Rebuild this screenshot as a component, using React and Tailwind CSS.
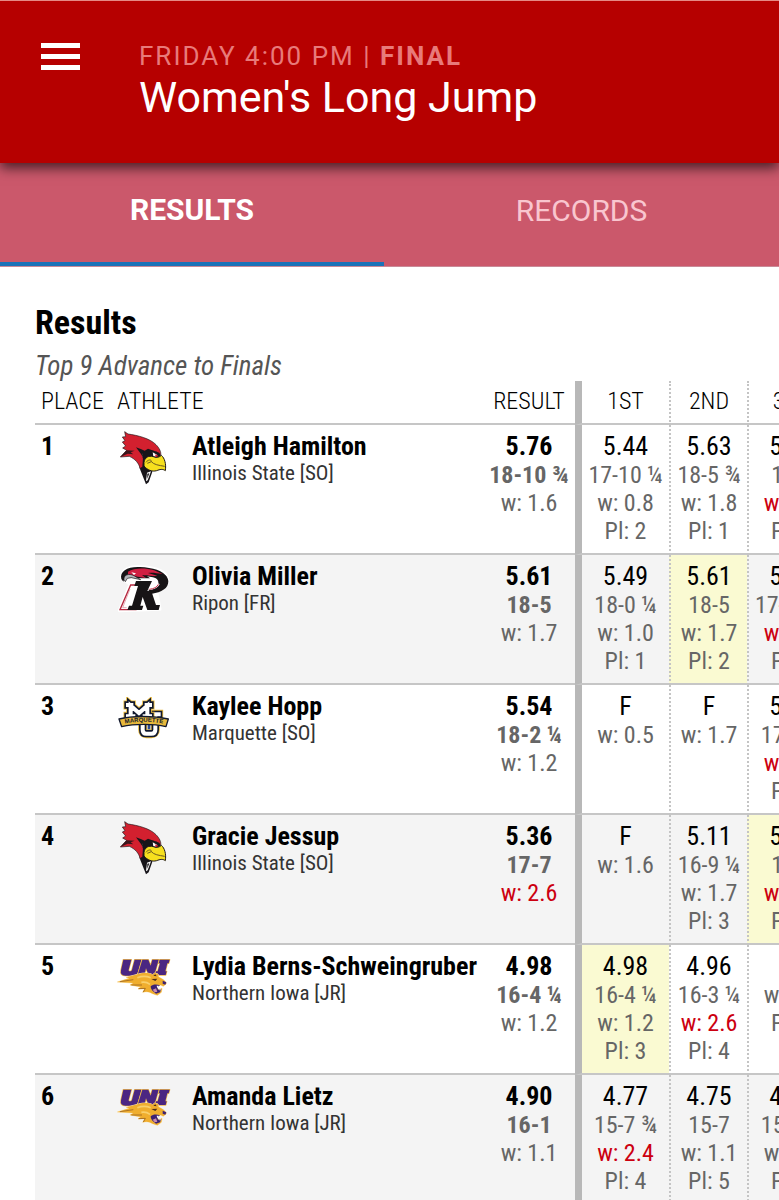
import React from 'react';

function RedbirdLogo() {
  return (
    <svg viewBox="51 27 162 174" className="h-[58px] w-[54px]" role="img" aria-label="Illinois State">
      <path d="M118 98 C122 122 116 134 121 150 L138 193 L146 187 L157 155 L150 140 Z" fill="#17151a" />
      <path d="M141 158 L153 154 L143 181 L138 184 Z" fill="#fff" />
      <path d="M142 161 L148 160 L142 176 Z" fill="#17151a" />
      <path
        d="M74 35 L84 42 C112 46 150 55 168 74 C178 84 184 96 182 106 L170 96 L154 92 L150 106 L138 96 C128 94 124 98 126 104 L130 116 L128 140 L120 146 C118 130 104 116 88 109 L61 111 L80 91 L68 84 L77 78 L67 66 L75 62 L67 51 L77 50 Z"
        fill="#d3202f"
        stroke="#1d171a"
        strokeWidth="2"
        strokeLinejoin="round"
      />
      <path d="M80 91 L104 92 L92 97 L100 103 L83 101 L61 111 Z" fill="#3a161c" />
      <path d="M108 82 L124 88 L134 92 L128 102 L132 114 L120 98 Z" fill="#17151a" />
      <path d="M128 96 L144 86 L178 98 L184 112 L176 118 L154 110 L136 116 L130 130 Z" fill="#17151a" />
      <path d="M158 97 L172 105 L170 112 L160 108 Z" fill="#fff" />
      <path d="M166 103 L174 107 L171 112 L166 110 Z" fill="#d3202f" />
      <path
        d="M132 127 C134 112 146 106 160 110 C172 115 180 110 184 106 C194 114 199 132 196 152 C188 146 180 148 170 152 C156 156 142 150 132 138 Z"
        fill="#f6e01e"
        stroke="#1d171a"
        strokeWidth="3"
        strokeLinejoin="round"
      />
      <path d="M138 127 C146 116 156 120 154 125 C162 134 176 136 194 139 M142 130 L154 125" fill="none" stroke="#6b5a20" strokeWidth="3" />
    </svg>
  );
}

function RiponLogo() {
  return (
    <svg viewBox="51 24 162 150" className="h-[50px] w-[54px]" role="img" aria-label="Ripon">
      <g stroke="#fff" strokeWidth="9" strokeLinejoin="round" fill="#fff">
        <path d="M64 68 C64 42 92 32 124 35 C160 37 202 46 204 76 C205 94 190 102 170 108 L180 163 L58 167 L90 88 Z" />
      </g>
      <path d="M106 90 H92 L60 164 H108 L110 156" fill="none" stroke="#b5283f" strokeWidth="4" />
      <path d="M90 102 L68 158 H80" fill="none" stroke="#d98593" strokeWidth="2" />
      <path d="M108 78 H156 L142 108 H154 L168 150 H180 L176 165 H142 L128 126 L121 152 H130 L126 165 H82 L87 152 H96 L114 93 H103 Z" fill="#171416" />
      <path d="M144 104 C160 104 172 98 175 86 C177 74 168 68 154 66 L130 62 L134 48 C172 44 204 56 205 78 C206 100 184 112 156 116 Z" fill="#171416" />
      <path d="M148 101 C162 100 172 96 176 86" fill="none" stroke="#fff" strokeWidth="7" />
      <path d="M148 103 C162 101 171 97 175 88" fill="none" stroke="#c62945" strokeWidth="3" />
      <path d="M64 72 C58 48 84 34 120 36 C158 38 190 46 202 68 C184 58 158 56 140 62 L150 70 H118 L84 68 C76 68 72 72 70 80 Z" fill="#171416" />
      <path d="M84 50 C102 39 134 38 162 46 L188 57 C168 55 160 52 144 54 L172 62 C154 64 140 62 126 60 L138 69 C118 67 98 62 84 60 Z" fill="#d01f42" />
      <path d="M72 74 C70 60 86 54 102 62 L122 74 L94 68 L82 70 L76 80 Z" fill="#b4b5b9" stroke="#171416" strokeWidth="2" />
      <path d="M94 52 L108 55 L102 60 Z" fill="#fff" />
    </svg>
  );
}

const MU_STROKES = [
  ['#e8b93c', 27],
  ['#12192e', 22],
  ['#ffffff', 12],
];

function MarquetteLogo() {
  return (
    <svg viewBox="51 30 162 126" className="h-[42px] w-[54px]" role="img" aria-label="Marquette">
      {MU_STROKES.map(([color, width]) => (
        <path
          key={color}
          d="M128 92 V128 Q128 140 139 140 H154 Q166 140 166 128 V86 M156 82 H176 M118 92 H132"
          fill="none"
          stroke={color}
          strokeWidth={width}
          strokeLinecap="square"
        />
      ))}
      <path d="M147 98 V127" stroke="#2c4b8f" strokeWidth="8" />
      {MU_STROKES.map(([color, width]) => (
        <path
          key={color}
          d="M92 86 V56 L117 78 L142 56 V86 M84 54 H94 M140 54 H150 M84 88 H100 M134 88 H150"
          fill="none"
          stroke={color}
          strokeWidth={width}
          strokeLinecap="square"
        />
      ))}
      <path d="M57 96 C96 86 160 86 205 96 L198 119 C160 110 104 110 65 119 Z" fill="#e8b93c" stroke="#12192e" strokeWidth="4" strokeLinejoin="round" />
      <path id="marquette-arc" d="M66 112 C104 102 160 102 198 112" fill="none" />
      <text fontFamily="Liberation Sans" fontSize="18" fontWeight="700" fill="#12192e" textAnchor="middle">
        <textPath href="#marquette-arc" startOffset="50%">MARQUETTE</textPath>
      </text>
    </svg>
  );
}

function PantherLogo() {
  return (
    <svg viewBox="51 30 162 126" className="h-[42px] w-[54px]" role="img" aria-label="Northern Iowa">
      <g fill="#4b2682" stroke="#efb84a" strokeWidth="4" paintOrder="stroke" strokeLinejoin="round">
        <path d="M70 44 H94 L86 74 Q85 79 89 79 H91 Q95 79 96 74 L104 44 H124 L114 80 Q110 92 98 92 H76 Q60 92 63 76 Z" />
        <path d="M127 44 H145 L152 62 L157 44 H176 L163 90 H146 L138 70 L133 90 H113 Z" />
        <path d="M179 44 H209 L206 55 H202 L196 79 H200 L197 90 H165 L168 79 H173 L180 55 H176 Z" />
      </g>
      <path
        d="M52 111 L88 100 L78 97 L108 89 C128 82 148 83 158 89 L164 84 L174 87 L176 96 C188 102 198 108 199 116 L190 124 L182 120 L172 124 L174 134 L186 130 L184 142 L172 151 L158 146 C148 140 140 138 128 142 L134 132 L114 132 L122 126 L90 120 L100 114 Z"
        fill="#f0ae2e"
        stroke="#fbe2ac"
        strokeWidth="3"
        paintOrder="stroke"
        strokeLinejoin="round"
      />
      <path d="M60 110 L100 104 M94 120 L126 120 M116 131 L136 130 L130 141" fill="none" stroke="#8a5420" strokeWidth="2" />
      <path d="M112 98 C128 92 142 94 152 98 M124 112 C134 110 142 112 150 118" fill="none" stroke="#f9d06c" strokeWidth="5" />
      <path d="M152 124 C160 116 172 118 180 121 L172 126 L174 134 L184 132 L180 142 L168 146 C160 140 152 134 152 124 Z" fill="#3d2274" />
      <path d="M158 134 L168 130 L172 140 L164 142 Z" fill="#c98bb0" />
      <path d="M154 102 L172 101 L166 108 Z M160 92 L166 88 L170 94 Z" fill="#4b2b1c" />
      <path d="M188 107 L199 112 L196 119 L188 116 Z" fill="#3d2274" />
      <path d="M170 122 L176 122 L172 130 Z M178 132 L183 130 L180 138 Z" fill="#fff" />
    </svg>
  );
}

const LOGOS = {
  redbird: [RedbirdLogo, ''],
  ripon: [RiponLogo, 'pt-1'],
  marquette: [MarquetteLogo, 'pt-2'],
  panther: [PantherLogo, 'pt-[6px]'],
};

const ATHLETES = [
  {
    place: 1, name: 'Atleigh Hamilton', team: 'Illinois State [SO]', logo: 'redbird',
    result: ['5.76', '18-10 ¾', 'w: 1.6'],
    jumps: [['5.44', '17-10 ¼', 'w: 0.8', 'Pl: 2'], ['5.63', '18-5 ¾', 'w: 1.8', 'Pl: 1'], ['5.49', '18-0', 'w: 2.3', 'Pl: 1']],
  },
  {
    place: 2, name: 'Olivia Miller', team: 'Ripon [FR]', logo: 'ripon', best: 1,
    result: ['5.61', '18-5', 'w: 1.7'],
    jumps: [['5.49', '18-0 ¼', 'w: 1.0', 'Pl: 1'], ['5.61', '18-5', 'w: 1.7', 'Pl: 2'], ['5.44', '17-10 ¼', 'w: 2.4', 'Pl: 2']],
  },
  {
    place: 3, name: 'Kaylee Hopp', team: 'Marquette [SO]', logo: 'marquette',
    result: ['5.54', '18-2 ¼', 'w: 1.2'],
    jumps: [['F', 'w: 0.5'], ['F', 'w: 1.7'], ['5.34', '17-6 ¼', 'w: 2.2', 'Pl: 4']],
  },
  {
    place: 4, name: 'Gracie Jessup', team: 'Illinois State [SO]', logo: 'redbird', best: 2,
    result: ['5.36', '17-7', 'w: 2.6'],
    jumps: [['F', 'w: 1.6'], ['5.11', '16-9 ¼', 'w: 1.7', 'Pl: 3'], ['5.36', '17-7', 'w: 2.6', 'Pl: 3']],
  },
  {
    place: 5, name: 'Lydia Berns-Schweingruber', team: 'Northern Iowa [JR]', logo: 'panther', best: 0,
    result: ['4.98', '16-4 ¼', 'w: 1.2'],
    jumps: [['4.98', '16-4 ¼', 'w: 1.2', 'Pl: 3'], ['4.96', '16-3 ¼', 'w: 2.6', 'Pl: 4'], ['F', 'w: 1.5', 'Pl: 5']],
  },
  {
    place: 6, name: 'Amanda Lietz', team: 'Northern Iowa [JR]', logo: 'panther',
    result: ['4.90', '16-1', 'w: 1.1'],
    jumps: [['4.77', '15-7 ¾', 'w: 2.4', 'Pl: 4'], ['4.75', '15-7', 'w: 1.1', 'Pl: 5'], ['4.78', '15-8 ¼', 'w: 1.3', 'Pl: 6']],
  },
];

const DIVIDERS = [
  'border-l-[7px] border-l-[#b8b8b8]',
  'border-l-2 border-l-[#c4c4c4] [border-left-style:dotted]',
  'border-l-2 border-l-[#c4c4c4] [border-left-style:dotted]',
];

const windAided = (line) => line.startsWith('w: ') && Number(line.slice(3)) > 2;

function Mark({ lines, strong }) {
  return lines.map((line, i) => {
    if (i === 0) {
      return (
        <div key={line} className={strong ? 'text-[26px] leading-[30px] font-bold' : 'text-[26px] leading-[30px]'}>
          {line}
        </div>
      );
    }
    const color = windAided(line) ? 'text-[#cc0010]' : 'text-[#666]';
    const weight = strong && i === 1 ? 'font-bold' : 'font-normal';
    return (
      <div key={line} className={`text-2xl leading-[28px] ${color} ${weight}`}>
        {line}
      </div>
    );
  });
}

function AthleteRow({ athlete }) {
  const [Logo, logoPad] = LOGOS[athlete.logo];
  const cell = 'border-b-2 border-b-[#c6c6c6] pt-[6px] pb-2 align-top';
  return (
    <tr className="even:bg-[#f4f4f4]">
      <td className={`${cell} pl-[6px] text-[26px] leading-[30px] font-bold`}>{athlete.place}</td>
      <td className="border-b-2 border-b-[#c6c6c6] pt-1 pl-[6px] align-top">
        <div className={logoPad}>
          <Logo />
        </div>
      </td>
      <td className={`${cell} pl-[6px] whitespace-nowrap`}>
        <div className="text-[26px] leading-[30px] font-bold">{athlete.name}</div>
        <div className="text-[21px] leading-[24px] text-[#333]">{athlete.team}</div>
      </td>
      <td className={`${cell} text-center whitespace-nowrap`}>
        <Mark lines={athlete.result} strong />
      </td>
      {athlete.jumps.map((lines, i) => (
        <td
          key={i}
          className={`${cell} ${DIVIDERS[i]} text-center whitespace-nowrap ${athlete.best === i ? 'bg-[#fafad2]' : ''}`}
        >
          <Mark lines={lines} />
        </td>
      ))}
    </tr>
  );
}

export default function App() {
  const head = 'border-b-2 border-b-[#c6c6c6] pt-[6px] pb-2 font-light';
  return (
    <div className="min-h-screen overflow-hidden bg-white font-[Roboto,sans-serif] text-black">
      <header className="relative z-10 flex h-[163px] items-start border-t border-t-[#e58a85] bg-[#b60000] pt-[38px] shadow-[0_5px_12px_rgba(0,0,0,0.65)]">
        <button type="button" aria-label="Open menu" className="mt-1 ml-[41px] flex w-[39px] flex-col gap-[6px]">
          <span className="h-[5px] w-full bg-white" />
          <span className="h-[5px] w-full bg-white" />
          <span className="h-[5px] w-full bg-white" />
        </button>
        <div className="ml-[59px] whitespace-nowrap">
          <p className="text-[26px] leading-[34px] tracking-[2px] text-[#e87a7a]">
            FRIDAY 4:00 PM | <b className="font-bold">FINAL</b>
          </p>
          <h1 className="text-[43px] leading-[48px] text-white">Women's Long Jump</h1>
        </div>
      </header>

      <nav className="flex h-[104px] border-b border-b-[#c98a98] bg-[#cb586b] text-[30px]">
        <a
          href="#results"
          aria-current="page"
          className="flex w-[49.3%] items-center justify-center border-b-4 border-b-[#1a72b8] pb-[6px] font-bold text-white"
        >
          RESULTS
        </a>
        <a href="#records" className="flex flex-1 items-center justify-center pb-2 text-[#f9c6cf]">
          RECORDS
        </a>
      </nav>

      <main id="results" className="pl-[35px] pt-[34px] font-['Roboto_Condensed','Liberation_Sans_Narrow',sans-serif]">
        <h2 className="text-[34px] leading-[42px] font-bold">Results</h2>
        <p className="pt-2 text-[27px] leading-[30px] text-[#555] italic">Top 9 Advance to Finals</p>
        <div className="overflow-x-auto [scrollbar-width:none]">
          <table className="w-[800px] table-fixed border-separate border-spacing-0">
            <colgroup>
              <col className="w-[76px]" />
              <col className="w-[75px]" />
              <col className="w-[297px]" />
              <col className="w-[92px]" />
              <col className="w-[94px]" />
              <col className="w-[78px]" />
              <col className="w-[88px]" />
            </colgroup>
            <thead className="text-2xl leading-[28px]">
              <tr>
                <th scope="col" className={`${head} pl-[6px] text-left`}>PLACE</th>
                <th scope="col" colSpan={2} className={`${head} pl-[6px] text-left`}>ATHLETE</th>
                <th scope="col" className={head}>RESULT</th>
                <th scope="col" className={`${head} ${DIVIDERS[0]}`}>1ST</th>
                <th scope="col" className={`${head} ${DIVIDERS[1]}`}>2ND</th>
                <th scope="col" className={`${head} ${DIVIDERS[2]}`}>3RD</th>
              </tr>
            </thead>
            <tbody>
              {ATHLETES.map((athlete) => (
                <AthleteRow key={athlete.place} athlete={athlete} />
              ))}
            </tbody>
          </table>
        </div>
      </main>
    </div>
  );
}
